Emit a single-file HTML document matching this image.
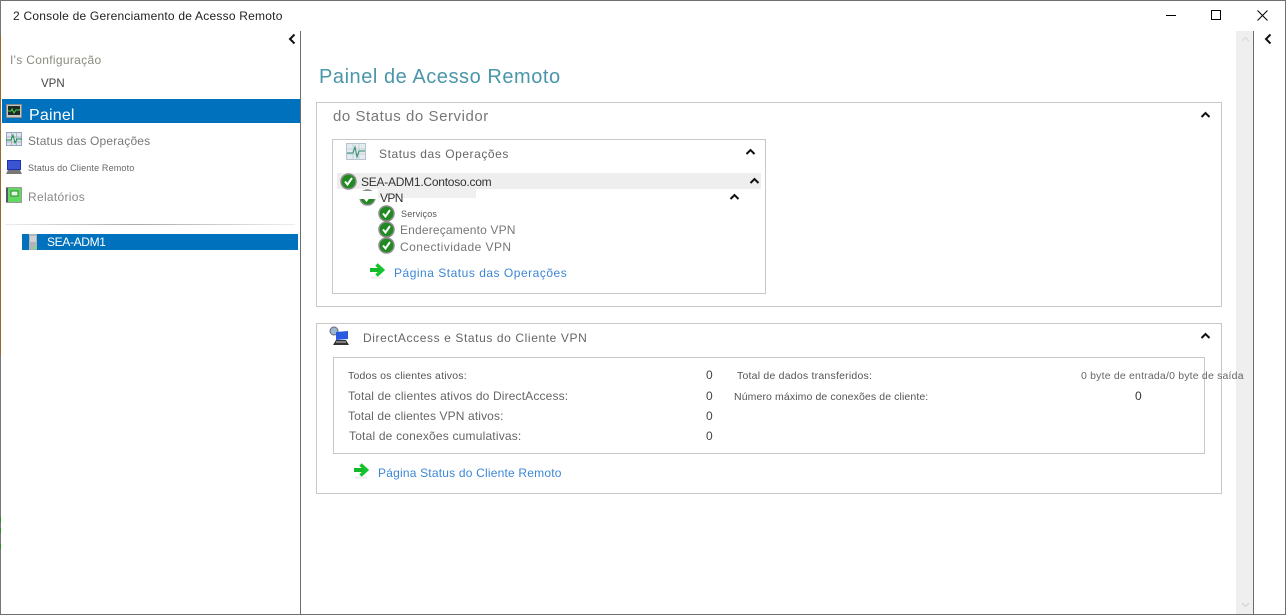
<!DOCTYPE html>
<html lang="pt"><head><meta charset="utf-8"><title>Console de Gerenciamento de Acesso Remoto</title>
<style>
html,body{margin:0;padding:0;background:#fff}
#r{position:relative;width:1286px;height:615px;overflow:hidden;background:#fff;font-family:"Liberation Sans",sans-serif;color:#666}
#r div,#r svg{position:absolute}
.t{white-space:nowrap;line-height:16px;height:16px}
.b{border:1px solid #c8c8c8;box-sizing:border-box}
.l{color:#3b87d4}
</style></head><body><div id="r">
<div style="left:0;top:0;width:1286px;height:1px;background:#707070"></div>
<div style="left:0;top:0;width:1px;height:615px;background:#777"></div>
<div style="left:0;top:35px;width:1px;height:320px;background:#96692f"></div>
<div style="left:0;top:517px;width:1px;height:5px;background:#2a8a2a"></div>
<div style="left:0;top:528px;width:1px;height:5px;background:#2a8a2a"></div>
<div style="left:0;top:544px;width:1px;height:5px;background:#2a8a2a"></div>
<div style="left:1285px;top:0;width:1px;height:615px;background:#707070"></div>
<div style="left:0;top:614px;width:1286px;height:1px;background:#707070"></div>
<div class="t" style="left:13px;top:8px;font-size:12px;color:#222;letter-spacing:.22px">2 Console de Gerenciamento de Acesso Remoto</div>
<svg style="left:1166px;top:15px" width="16" height="2"><rect width="10" height="1" fill="#000"/></svg>
<svg style="left:1211px;top:10px" width="11" height="11"><rect x=".5" y=".5" width="9" height="9" fill="none" stroke="#000"/></svg>
<svg style="left:1257px;top:10px" width="11" height="11"><path d="M.5.5l10 10M10.500.5l-10 10" stroke="#000" fill="none"/></svg>

<div style="left:300px;top:31px;width:1px;height:583px;background:#6d6d6d"></div>
<div style="left:1236px;top:31px;width:17px;height:583px;background:#efefef"></div>
<div style="left:1253px;top:31px;width:1px;height:583px;background:#6d6d6d"></div>
<svg style="left:1241px;top:36px" width="9" height="6"><path d="M1 5l3.500-3.500L8 5" stroke="#d8d8d8" fill="none"/></svg>
<svg style="left:1241px;top:602px" width="9" height="6"><path d="M1 1l3.500 3.500L8 1" stroke="#d0d0d0" fill="none"/></svg>
<svg style="left:288px;top:33px" width="9" height="12"><path d="M6.500 1.500L2 6l4.500 4.500" stroke="#111" stroke-width="2" fill="none"/></svg>
<svg style="left:1264px;top:33px" width="9" height="12"><path d="M6.500 1.500L2 6l4.500 4.500" stroke="#111" stroke-width="2" fill="none"/></svg>

<div class="t" style="left:10px;top:52px;font-size:12px;color:#8a8a80;letter-spacing:.32px">I's Configuração</div>
<div class="t" style="left:41px;top:76px;font-size:11.500px;color:#444">VPN</div>
<div style="left:2px;top:99px;width:298px;height:24px;background:#0071bc"></div>
<svg style="left:6px;top:104px" width="16" height="14"><rect x=".5" y=".5" width="15" height="13" fill="#c4c8c4" stroke="#8a8a8a"/><rect x="2" y="2" width="12" height="9" fill="#1d2b22"/><path d="M2 7h3l1-2 2 4 2-3h4" stroke="#4fd04f" fill="none"/></svg>
<div class="t" style="left:29px;top:108px;height:15px;overflow:hidden;font-size:16px;color:#fff;letter-spacing:.2px">Painel</div>

<svg style="left:6px;top:132px" width="16" height="14"><rect x=".5" y=".5" width="15" height="13" fill="#dfe6f2" stroke="#9aa5b8"/><path d="M5.500 1v12M10.500 1v12M1 5h14M1 10h14" stroke="#aab4c8"/><path d="M0 8h5l2-5 2 8 2-4h5" stroke="#1a8a3a" fill="none"/></svg>
<div class="t" style="left:28px;top:133px;font-size:12px;color:#777;letter-spacing:.18px">Status das Operações</div>
<svg style="left:6px;top:160px" width="16" height="15"><rect x="1" y="0" width="14" height="10" fill="#2030b0"/><rect x="2" y="1" width="12" height="8" fill="#3a55d0"/><path d="M0 14l2-4h12l2 4z" fill="#777"/></svg>
<div class="t" style="left:28px;top:160px;font-size:9px;color:#666;letter-spacing:.16px">Status do Cliente Remoto</div>
<svg style="left:6px;top:187px" width="16" height="16"><rect x=".5" y=".5" width="15" height="15" fill="#62d862" stroke="#999"/><rect x="0" y="1" width="2" height="14" fill="#556"/><rect x="5" y="4" width="7" height="5" fill="#e4f8e4" stroke="#2a8a2a"/></svg>
<div class="t" style="left:28px;top:189px;font-size:12px;color:#888;letter-spacing:.3px">Relatórios</div>
<div style="left:5px;top:224px;width:290px;height:1px;background:linear-gradient(90deg,#eee,#aaa 45%,#eee)"></div>
<div style="left:22px;top:234px;width:276px;height:16px;background:#0071bc"></div>
<svg style="left:29px;top:234px" width="8" height="16"><rect width="8" height="16" fill="#b0b4b8"/><path d="M1 3h6M1 5h6M1 7h6" stroke="#eee"/><rect x="5" y="13" width="2" height="2" fill="#4f4"/></svg>
<div class="t" style="left:47px;top:234px;font-size:12px;color:#fff;letter-spacing:-.35px">SEA-ADM1</div>

<div class="t" style="left:319px;top:67px;font-size:20px;line-height:20px;height:20px;color:#4a96aa;letter-spacing:.55px">Painel de Acesso Remoto</div>

<div class="b" style="left:316px;top:102px;width:906px;height:205px"></div>
<div class="t" style="left:333px;top:109px;font-size:15px;color:#777;letter-spacing:.55px">do Status do Servidor</div>
<svg style="left:1200px;top:111px" width="11" height="8"><use href="#c"/></svg>
<div class="b" style="left:332px;top:139px;width:434px;height:155px"></div>
<svg style="left:346px;top:143px" width="20" height="17"><rect x=".5" y=".5" width="19" height="16" fill="#e4ecf0" stroke="#b8c4d0"/><path d="M7 1v15M13 1v15M1 6h18M1 11h18" stroke="#c8d2dc"/><path d="M1 10h6l2-6 2 10 2-6h6" stroke="#2a8a6a" fill="none"/></svg>
<div class="t" style="left:379px;top:146px;font-size:12px;color:#666;letter-spacing:.56px">Status das Operações</div>
<svg style="left:745px;top:148px" width="11" height="8"><use href="#c"/></svg>
<div style="left:337px;top:173px;width:424px;height:16px;background:#eee"></div>
<svg style="left:340px;top:173px" width="17" height="17"><use href="#k"/></svg>
<div class="t" style="left:361px;top:174px;font-size:12px;color:#333;letter-spacing:-.25px">SEA-ADM1.Contoso.com</div>
<svg style="left:749px;top:177px" width="11" height="8"><use href="#c"/></svg>
<svg style="left:359px;top:189px" width="17" height="17"><use href="#k"/></svg>
<div style="left:359px;top:191px;width:17px;height:8px;background:#fff"></div>
<div style="left:378px;top:189px;width:98px;height:9px;background:#f0f0f0"></div>
<div class="t" style="left:380px;top:190px;font-size:12px;color:#333;letter-spacing:-.6px">VPN</div>
<svg style="left:729px;top:193px" width="11" height="8"><use href="#c"/></svg>
<svg style="left:378px;top:205px" width="17" height="17"><use href="#k"/></svg>
<div class="t" style="left:401px;top:206px;font-size:9px;color:#555;letter-spacing:.2px">Serviços</div>
<svg style="left:378px;top:221px" width="17" height="17"><use href="#k"/></svg>
<div class="t" style="left:400px;top:222px;font-size:12px;color:#777;letter-spacing:.17px">Endereçamento VPN</div>
<svg style="left:378px;top:237px" width="17" height="17"><use href="#k"/></svg>
<div class="t" style="left:400px;top:239px;font-size:12px;color:#777;letter-spacing:.44px">Conectividade VPN</div>
<svg style="left:368px;top:262px" width="18" height="17"><use href="#a"/></svg>
<div class="t l" style="left:394px;top:265px;font-size:12px;letter-spacing:.51px">Página Status das Operações</div>

<div class="b" style="left:316px;top:323px;width:906px;height:171px"></div>
<svg style="left:329px;top:326px" width="21" height="21"><circle cx="5" cy="5" r="4" fill="#9ab8d0" stroke="#667"/><path d="M7 6l12-1v8l-12 1z" fill="#2a5ae0"/><path d="M4 19l3-5h10l3 5z" fill="#333"/><path d="M7 16h10" stroke="#ccc"/></svg>
<div class="t" style="left:363px;top:330px;font-size:12px;color:#666;letter-spacing:.6px">DirectAccess e Status do Cliente VPN</div>
<svg style="left:1200px;top:332px" width="11" height="8"><use href="#c"/></svg>
<div class="b" style="left:333px;top:357px;width:872px;height:97px"></div>
<div class="t" style="left:348px;top:368px;font-size:10.500px;color:#555;letter-spacing:.2px">Todos os clientes ativos:</div>
<div class="t" style="left:348px;top:388px;font-size:12px;color:#666;letter-spacing:.15px">Total de clientes ativos do DirectAccess:</div>
<div class="t" style="left:348px;top:408px;font-size:12px;color:#666;letter-spacing:.12px">Total de clientes VPN ativos:</div>
<div class="t" style="left:349px;top:428px;font-size:12px;color:#666;letter-spacing:.19px">Total de conexões cumulativas:</div>
<div class="t" style="left:706px;top:367px;font-size:12px;color:#444">0</div>
<div class="t" style="left:706px;top:388px;font-size:12px;color:#444">0</div>
<div class="t" style="left:706px;top:408px;font-size:12px;color:#444">0</div>
<div class="t" style="left:706px;top:428px;font-size:12px;color:#444">0</div>
<div class="t" style="left:737px;top:368px;font-size:10.500px;color:#555;letter-spacing:.22px">Total de dados transferidos:</div>
<div class="t" style="left:734px;top:389px;font-size:10.500px;color:#555;letter-spacing:.11px">Número máximo de conexões de cliente:</div>
<div class="t" style="left:1081px;top:368px;font-size:10.500px;color:#666;letter-spacing:.19px">0 byte de entrada/0 byte de saída</div>
<div class="t" style="left:1135px;top:388px;font-size:12px;color:#333">0</div>
<svg style="left:352px;top:462px" width="18" height="17"><use href="#a"/></svg>
<div class="t l" style="left:378px;top:465px;font-size:12px;letter-spacing:.2px">Página Status do Cliente Remoto</div>

<svg width="0" height="0" style="left:0;top:0"><defs>
<g id="c"><path d="M1.500 6L5.500 2l4 4" stroke="#111" stroke-width="2" fill="none"/></g>
<g id="k"><circle cx="8.500" cy="8.500" r="7.500" fill="#1f8a1f" stroke="#8c8c8c" stroke-width="1.500"/><path d="M5 8.500l2.500 3L12 5" stroke="#fff" stroke-width="2" fill="none"/></g>
<g id="a"><path d="M3 15.500h12" stroke="#eee" stroke-width="2"/><path d="M2 8h11" stroke="#14b82c" stroke-width="4"/><path d="M8.500 2.500L14.500 8l-6 5.500" stroke="#14c42c" stroke-width="3.500" fill="none"/></g>
</defs></svg>
</div></body></html>
